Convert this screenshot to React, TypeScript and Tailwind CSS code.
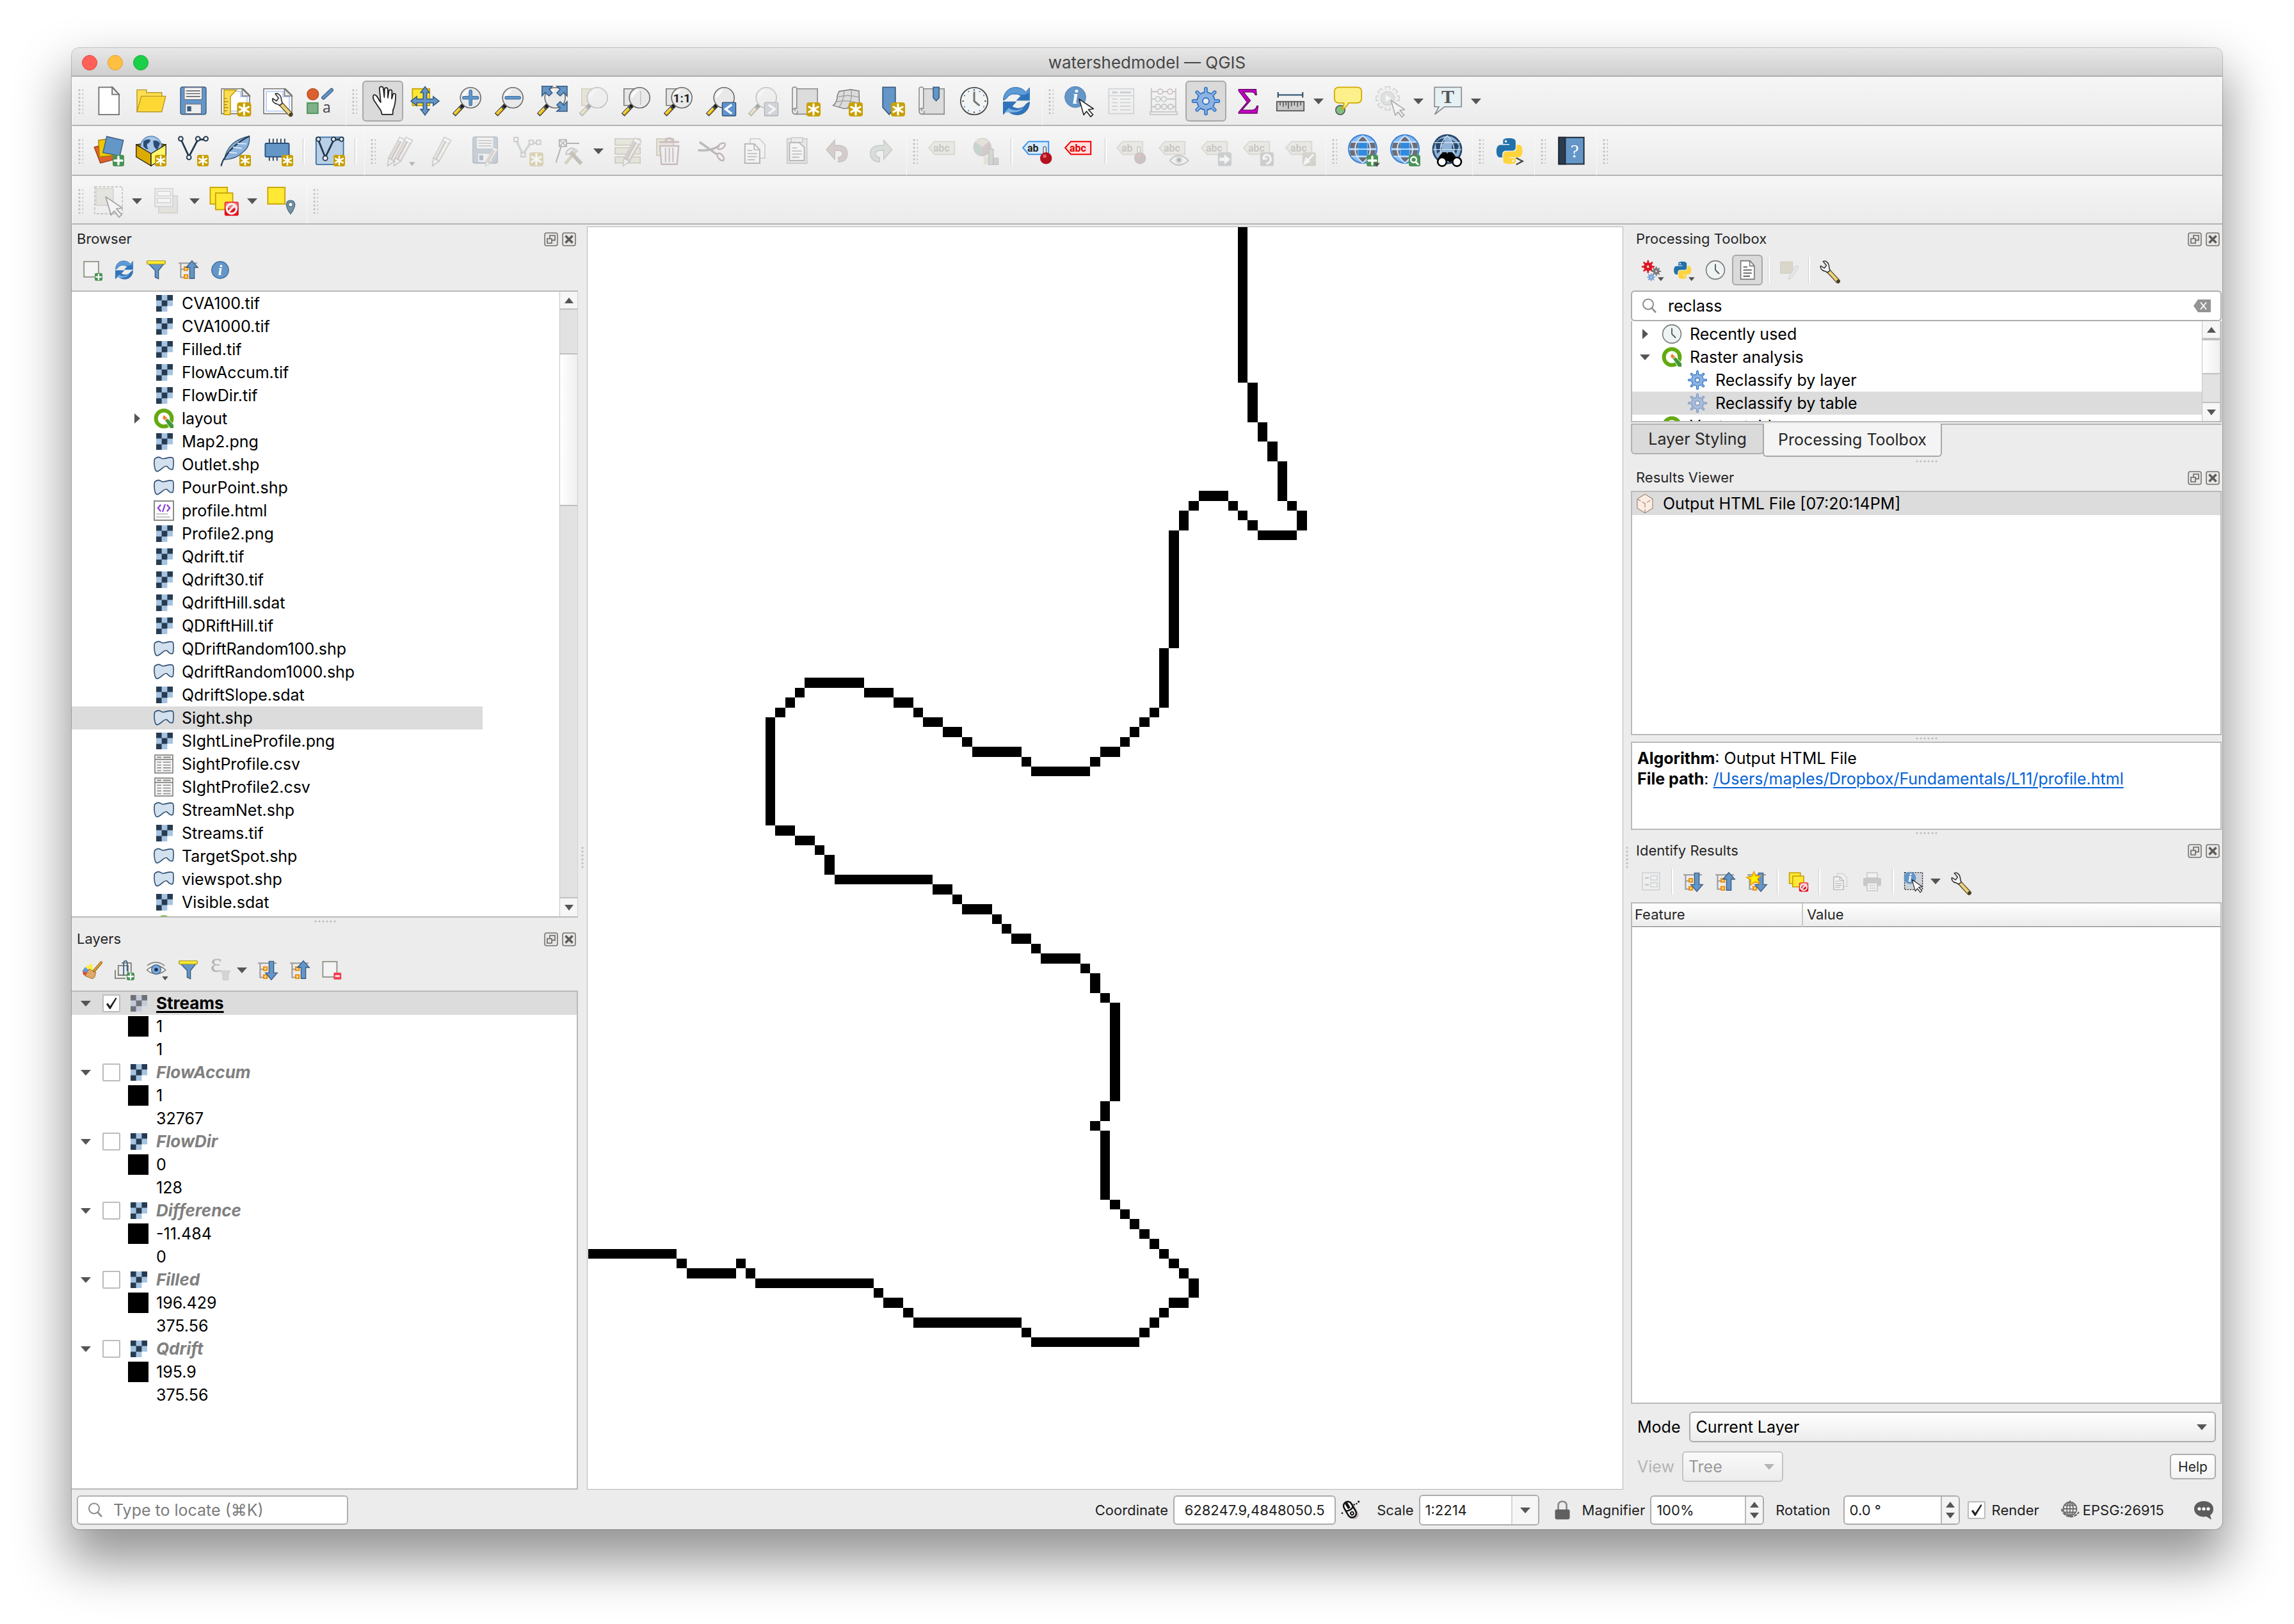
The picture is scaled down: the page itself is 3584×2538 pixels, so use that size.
import type { ReactNode } from "react";

const BLUE = "#6496c8";
const NAVY = "#3a5d82";
const DARK = "#233a4d";
const GREY = "#6d6d6d";

const PY_TOP =
  "M14.25.18l.9.2.73.26.59.3.45.32.34.34.25.34.16.33.1.3.04.26.02.2-.01.13V8.5l-.05.63-.13.55-.21.46-.26.38-.3.31-.33.25-.35.19-.35.14-.33.1-.3.07-.26.04-.21.02H8.77l-.69.05-.59.14-.5.22-.41.27-.33.32-.27.35-.2.36-.15.37-.1.35-.07.32-.04.27-.02.21v3.06H3.17l-.21-.03-.28-.07-.32-.12-.35-.18-.36-.26-.36-.36-.35-.46-.32-.59-.28-.73-.21-.88-.14-1.05-.05-1.23.06-1.22.16-1.04.24-.87.32-.71.36-.57.4-.44.42-.33.42-.24.4-.16.36-.1.32-.05.24-.01h.16l.06.01h8.16v-.83H6.18l-.01-2.75-.02-.37.05-.34.11-.31.17-.28.25-.26.31-.23.38-.2.44-.18.51-.15.58-.12.64-.1.71-.06.77-.04.84-.02 1.27.05zm-6.3 1.98l-.23.33-.08.41.08.41.23.34.33.22.41.09.41-.09.33-.22.23-.34.08-.41-.08-.41-.23-.33-.33-.22-.41-.09-.41.09z";
const PY_BOTTOM =
  "M21.1 6.11l.28.06.32.12.35.18.36.27.36.35.35.47.32.59.28.73.21.88.14 1.04.05 1.23-.06 1.23-.16 1.04-.24.86-.32.71-.36.57-.4.45-.42.33-.42.24-.4.16-.36.09-.32.05-.24.02-.16-.01h-8.22v.82h5.84l.01 2.76.02.36-.05.34-.11.31-.17.29-.25.25-.31.24-.38.2-.44.17-.51.15-.58.13-.64.09-.71.07-.77.04-.84.01-1.27-.04-1.07-.14-.9-.2-.73-.25-.59-.3-.45-.33-.34-.34-.25-.34-.16-.33-.1-.3-.04-.25-.02-.2.01-.13v-5.34l.05-.64.13-.54.21-.46.26-.38.3-.32.33-.24.35-.2.35-.14.33-.1.3-.06.26-.04.21-.02.13-.01h5.84l.69-.05.59-.14.5-.21.41-.28.33-.32.27-.35.2-.36.15-.36.1-.35.07-.32.04-.28.02-.21V6.07h2.09l.14.01zm-6.47 14.25l-.23.33-.08.41.08.41.23.33.33.23.41.08.41-.08.33-.23.23-.33.08-.41-.08-.41-.23-.33-.33-.23-.41-.08-.41.08z";

/* ---------- drawing helpers ---------- */

function Big({ children }: { children: ReactNode }) {
  return (
    <svg viewBox="0 0 24 24" className="size-12 overflow-visible" aria-hidden="true">
      {children}
    </svg>
  );
}

function Small({ children }: { children: ReactNode }) {
  return (
    <svg viewBox="0 0 16 16" className="size-8 shrink-0 overflow-visible" aria-hidden="true">
      {children}
    </svg>
  );
}

function StarBadge({ x = 15, y = 15, s = 9 }: { x?: number; y?: number; s?: number }) {
  return (
    <g transform={`translate(${x} ${y}) scale(${s / 9})`}>
      <rect width="9" height="9" rx="1.6" fill="#c8a000" />
      <path d="M4.5 1.2v6.6M1.6 2.9l5.8 3.2M7.4 2.9L1.6 6.1" stroke="#fff" strokeWidth="1.3" strokeLinecap="round" />
      <circle cx="4.5" cy="4.5" r="1.3" fill="#fff" />
    </g>
  );
}

function PlusBadge({ x = 15, y = 15, s = 9 }: { x?: number; y?: number; s?: number }) {
  return (
    <g transform={`translate(${x} ${y}) scale(${s / 9})`}>
      <rect width="9" height="9" rx="1.6" fill="#4b9358" />
      <path d="M4.5 1.5v6M1.5 4.5h6" stroke="#fff" strokeWidth="1.7" strokeLinecap="round" />
    </g>
  );
}

function NoEntry({ x, y, s }: { x: number; y: number; s: number }) {
  return (
    <g transform={`translate(${x} ${y}) scale(${s / 11})`}>
      <rect width="11" height="11" rx="1.4" fill="#e3101c" />
      <path d="M.6 5.2V1.6Q.6.6 1.6.6h7.8q1 0 1 1v3.6Z" fill="#f47a80" />
      <circle cx="5.5" cy="5.5" r="3.8" fill="none" stroke="#f1f1f1" strokeWidth="1.6" />
      <path d="M3 8L8 3" stroke="#f1f1f1" strokeWidth="1.6" />
    </g>
  );
}

function Lens({ children }: { children?: ReactNode }) {
  return (
    <>
      <path d="M8.6 15.4L1.6 22.8" stroke="#4c4c4c" strokeWidth="3.4" />
      <path d="M6.3 17.9L2.2 22.2" stroke="#fcc300" strokeWidth="1.9" />
      <path d="M5.9 17.2L1.7 21.6" stroke="#ffe57a" strokeWidth=".7" />
      <circle cx="8.4" cy="15.7" r="1.4" fill="#1a1a1a" />
      <circle cx="14.6" cy="9.4" r="8" fill="#e9e9e9" stroke="#6a6a6a" strokeWidth=".8" />
      <path d="M8 9.6A6.7 6.7 0 0 1 14.5 2.7C12 5 10.5 9 8 9.6Z" fill="#fbfbfb" />
      {children}
    </>
  );
}

function Arrowhead({ x, y }: { x: number; y: number }) {
  return <path d={`M${x} ${y}h4.8l-2.4 3Z`} fill="#505050" />;
}

function GearShape({ fill, stroke, c = 12, k = 1 }: { fill: string; stroke: string; c?: number; k?: number }) {
  const teeth = [0, 45, 90, 135, 180, 225, 270, 315];
  return (
    <g transform={`translate(${c} ${c}) scale(${k})`} strokeLinecap="round">
      {teeth.map((a) => (
        <path key={a} d="M0 -6V-9.7" stroke={stroke} strokeWidth="2.9" transform={`rotate(${a})`} />
      ))}
      <circle r="6.9" fill={fill} stroke={stroke} strokeWidth=".9" />
      {teeth.map((a) => (
        <path key={a} d="M0 -5V-9.7" stroke={fill} strokeWidth="1.3" transform={`rotate(${a})`} />
      ))}
      <circle r="2.5" fill="#ececec" stroke={stroke} strokeWidth=".9" />
    </g>
  );
}

function RefreshShape() {
  const arm = "M1.8 11.4C1.8 5.4 6 1.3 11.2 1.3C15 1.3 17.6 2.8 19.2 5L22.2 1.6V11.4H12.2L15.4 8C13 5.4 6.6 5.6 4.4 9.8Z";
  return (
    <>
      <path d={arm} fill="#5b9bd8" stroke="#2c68a8" strokeWidth=".5" />
      <path d="M9 7.2C12 6 14.6 7 15.8 8.2L13 11H21.8V5C17 9 14 6 9 7.2Z" fill="#2f74bb" />
      <path d={arm} fill="#2f74bb" stroke="#2c68a8" strokeWidth=".5" transform="rotate(180 12 12)" />
      <path d="M3 20.6L6 17.4C9 20 16 20 18.4 15.4C16 22 8 21 3 20.6Z" fill="#7db1e3" />
    </>
  );
}

function CursorShape({ x = 12, y = 11.5, k = 1 }: { x?: number; y?: number; k?: number }) {
  return (
    <path
      d="M0 0L11.2 7.6L7.2 8.2L10.8 12.2L9 13.8L5.8 9.6L3.6 12.4Z"
      fill="#fff"
      stroke="#222"
      strokeWidth=".8"
      strokeLinejoin="round"
      transform={`translate(${x} ${y}) scale(${k})`}
    />
  );
}

function SheetShape({ lines = true }: { lines?: boolean }) {
  return (
    <>
      <path d="M1 2.4H18L23 7.4V21.8H1Z" fill="#fff" stroke="#777" strokeWidth=".8" />
      {lines && <path d="M3 4.4H16V8.6H21V19.8H3Z" fill="none" stroke="#b9cdf4" strokeWidth=".9" />}
      <path d="M17.2 2.4V8H23Z" fill="#e8e8e8" stroke="#777" strokeWidth=".8" />
    </>
  );
}

function WrenchShape() {
  return (
    <>
      <path d="M14.2 14L22 22.4" stroke="#4c4020" strokeWidth="3.6" strokeLinecap="round" />
      <path d="M14.6 14.4L21.6 22" stroke="#ecd27a" strokeWidth="2.4" />
      <circle cx="21.8" cy="22" r=".9" fill="#3c3c3c" />
      <path
        d="M10 6.4C11.6 5.4 14 6.8 14.6 9.4C14.8 10.8 14.8 12 15.6 13.6L13.4 15.4C12.4 14.2 11 14.4 9.6 13.6C8 12.4 7.6 11 8 10L11 11.8L12.6 9.6Z"
        fill="#f3f3f3"
        stroke="#333"
        strokeWidth=".8"
      />
    </>
  );
}

function Tag({ text = "abc", stroke = "#b4ae8c", fill = "#dcd8c0", ink = "#77776c" }: { text?: string; stroke?: string; fill?: string; ink?: string }) {
  return (
    <>
      <path d="M.6 9.5L5 4.6H20.6V14.6H5Z" fill={fill} stroke={stroke} strokeWidth="1" />
      <text x="4" y="12.4" fontSize="8" fontWeight="700" fontFamily="Roboto, sans-serif" fill={ink}>
        {text}
      </text>
    </>
  );
}

function PinHead({ c }: { c: string }) {
  return (
    <>
      <path d="M17.6 14V9.6" stroke="#555" strokeWidth="2.8" strokeLinecap="round" />
      <path d="M17.6 14V9.6" stroke="#eee" strokeWidth="1.6" strokeLinecap="round" />
      <circle cx="18.6" cy="17.6" r="4.6" fill={c} />
      <circle cx="17.6" cy="16" r="1.4" fill="#e8606a" />
    </>
  );
}

function PencilShape({ x = 0, body = "#d8b4a8" }: { x?: number; body?: string }) {
  return (
    <g transform={`translate(${x} 0)`}>
      <path d="M4 17.4L12.6 1.2L17.8 3.8L8.6 20Z" fill={body} stroke="#8c8c8c" strokeWidth=".7" />
      <path d="M6.2 18.4L14.6 2.6" stroke="#8a7468" strokeWidth="1" />
      <path d="M12.6 1.2L17.8 3.8L16.4 6.2L11.2 3.8Z" fill="#f6f6f6" stroke="#8c8c8c" strokeWidth=".7" />
      <path d="M4 17.4L8.6 20L3.2 23.6Z" fill="#eee" stroke="#777" strokeWidth=".7" />
      <path d="M7.6 18L15 5" stroke="#fff" strokeWidth=".8" />
    </g>
  );
}

function FloppyShape() {
  return (
    <>
      <rect x="2" y="1" width="20" height="21.4" rx="1.6" fill={BLUE} stroke={NAVY} strokeWidth=".7" />
      <rect x="5" y="1.4" width="13.8" height="9.4" fill="#f3f3f3" stroke="#667" strokeWidth=".5" />
      <path d="M6.4 4H17.4M6.4 6.2H17.4M6.4 8.4H17.4" stroke="#555" strokeWidth=".7" />
      <rect x="5.8" y="14.4" width="12.4" height="7.4" fill="#eee" stroke="#667" strokeWidth=".5" />
      <rect x="7.2" y="16" width="3.2" height="4" fill={NAVY} />
    </>
  );
}

function RollShape() {
  return (
    <>
      <path d="M4 2.4H21.6V22.2H4Z" fill="#dcdcdc" stroke="#8c8c8c" strokeWidth=".8" />
      <path d="M2 2.6Q2 1 3.6 1Q5.4 1 5.4 2.6V17.6H3.6Q2 18 2 20.4Z" fill="#efefef" stroke="#8c8c8c" strokeWidth=".8" />
      <path d="M2 20Q2 22.2 4.4 22.2Q6 22 6 19.6" fill="#e6e6e6" stroke="#8c8c8c" strokeWidth=".8" />
    </>
  );
}

function GlobeWire() {
  return (
    <>
      <circle cx="12" cy="10.4" r="11" fill="#8bbcf0" stroke="#3f86d8" strokeWidth="1.1" />
      <path d="M3 5.4H8.4V9.8H2Q2 7.4 3 5.4ZM2 11.4H8V15.8H3Q2 13.6 2 11.4ZM16 5.4H21Q22 7.4 22 9.8H16ZM16 11.4H22Q22 13.6 21 15.8H16ZM12 .4Q14.6 2 15.4 4.4H8.6Q9.4 2 12 .4ZM8.6 17H15.4Q14.4 19.6 12 21Q9.6 19.6 8.6 17Z" fill="#6d6d74" />
      <rect x="8.6" y="5.6" width="6.8" height="10" fill="#2f8ae0" />
      <path d="M1.2 10.6H22.8M3 5H21M3 16.2H21" stroke="#cfe6ff" strokeWidth=".9" />
      <path d="M12 0C4 6 4 15 12 21.4M12 0C20 6 20 15 12 21.4" fill="none" stroke="#cfe6ff" strokeWidth="1" />
    </>
  );
}

function SelectedSquare() {
  return <rect x="1.2" y="1.4" width="13.4" height="13" fill="#ffe935" stroke="#c8a000" strokeWidth=".9" />;
}

/* ---------- toolbar icons ---------- */

const copyArt = (
  <>
    <path d="M8.6 2.4H15.6L20 7V17.6H8.6Z" fill="#f2f2f2" stroke="#888" strokeWidth=".8" />
    <path d="M4.4 6.4H11.8L16 11V21.6H4.4Z" fill="#f8f8f8" stroke="#444" strokeWidth=".9" />
    <path d="M11.6 6.4V11H16M6.4 11.6H10M6.4 14H13.8M6.4 16.4H13.8M6.4 18.8H12" fill="none" stroke="#555" strokeWidth=".8" />
  </>
);

const Icons = {
  newProject: (
    <Big>
      <path d="M4.2 1.2H15L20 6.8V22.6H4.2Z" fill="#fff" stroke="#707070" strokeWidth=".9" />
      <path d="M14.6 1.2V6.8H20Z" fill="#eee" stroke="#707070" strokeWidth=".9" />
    </Big>
  ),
  open: (
    <Big>
      <path d="M1 20.2V3.2H8.4V5.4H20.4V9" fill="#ffdf4e" stroke="#b8962c" strokeWidth=".7" />
      <path d="M1 20.4L4.4 8.2H23.4L20.4 20.4Z" fill="#fdd835" stroke="#b8962c" strokeWidth=".7" />
    </Big>
  ),
  save: <Big><FloppyShape /></Big>,
  newLayout: (
    <Big>
      <SheetShape />
      <path d="M3 3.4H12.6L8 8.4V22.6H3Z" fill="#fbdc55" stroke="#c8a000" strokeWidth=".8" />
      <path d="M3 10h2.4M3 12.4h3.4M3 14.8h2.4M3 17.2h3.4M3 19.6h2.4" stroke="#9a7c00" strokeWidth=".6" />
      <StarBadge x={13.2} y={13} s={11} />
    </Big>
  ),
  layoutManager: <Big><SheetShape /><WrenchShape /></Big>,
  styleManager: (
    <Big>
      <circle cx="6.4" cy="6.6" r="4.4" fill="#dd6130" stroke="#b14a1e" strokeWidth=".7" />
      <path d="M14.6 9.4L21 3.4" stroke={NAVY} strokeWidth="3" strokeLinecap="round" />
      <path d="M14.6 9.4L21 3.4" stroke={BLUE} strokeWidth="1.8" strokeLinecap="round" />
      <rect x="2" y="13.4" width="8.4" height="8.2" fill="#7fb089" stroke="#4b9358" strokeWidth=".9" />
      <text x="14" y="21" fontSize="11.5" fontFamily="'Open Sans', sans-serif" fill="#444">a</text>
    </Big>
  ),
  pan: (
    <Big>
      <path
        d="M11.4 22.4L10.6 19.5L5.2 11.5C4 9 4.2 7.4 5.4 7.1C6.8 6.9 7.8 8.6 9.6 12L10.4 13L9.4 2C9.4 .3 12.2 .3 12.4 2L13.2 9L13.4 2.6C13.6 1.2 15.9 1.3 15.9 2.8L16 9.4L16.8 4C17 2.8 19.2 3 19.2 4.4L19 10.2L20 6.8C20.4 5.6 22.2 6 22.1 7.4C22 12 21.5 16 20 19L19.8 22.4Z"
        fill="#fff"
        stroke="#222"
        strokeWidth=".9"
        strokeLinejoin="round"
      />
    </Big>
  ),
  panSelection: (
    <Big>
      <rect x="2.2" y="2.4" width="13.4" height="13" fill="#ffe935" stroke="#c8a000" strokeWidth=".9" />
      <path
        d="M12 .8L15.4 5.4H13.4V10.4H18.4V8.4L23 12L18.4 15.6V13.4H13.4V18.4H15.4L12 23L8.6 18.4H10.6V13.4H5.6V15.6L1 12L5.6 8.4V10.4H10.6V5.4H8.6Z"
        fill={BLUE}
        stroke={NAVY}
        strokeWidth=".8"
      />
    </Big>
  ),
  zoomIn: <Big><Lens><path d="M14.6 4.4V14.4M9.4 9.4H19.8" stroke="#3a6fa5" strokeWidth="2.8" strokeLinecap="round" /><path d="M14.6 4.4V14.4M9.4 9.4H19.8" stroke={BLUE} strokeWidth="1.8" strokeLinecap="round" /></Lens></Big>,
  zoomOut: <Big><Lens><path d="M9.6 9.4H19.6" stroke="#3a6fa5" strokeWidth="2.8" strokeLinecap="round" /><path d="M9.6 9.4H19.6" stroke={BLUE} strokeWidth="1.8" strokeLinecap="round" /></Lens></Big>,
  zoomFull: (
    <Big>
      <Lens />
      <g fill={BLUE} stroke={NAVY} strokeWidth=".8">
        <path d="M4.4 .4H12.4L10 2.8L12.4 5.6L9.8 8L7 5.2L4.4 8Z" />
        <path d="M24 .4H16L18.6 2.8L16 5.6L18.6 8L21.4 5.2L24 8Z" />
        <path d="M24 20H16L18.6 17.6L16 15L18.6 12.4L21.4 15.2L24 12.4Z" />
      </g>
    </Big>
  ),
  zoomSelection: <Big><rect x="2.4" y="2.4" width="13" height="13" fill="#d8cf8a" stroke="#a89a40" strokeWidth=".8" /><Lens /></Big>,
  zoomLayer: <Big><path d="M2.4 2.4H15.4V15.4H2.4Z" fill="#e6e6e6" stroke="#7c7c74" strokeWidth=".8" /><Lens><path d="M15.4 4V15" stroke="#c4c4c4" strokeWidth=".8" /></Lens></Big>,
  zoomNative: (
    <Big>
      <path d="M2.4 2.4H15.4V15.4H2.4Z" fill="#e6e6e6" stroke="#7c7c74" strokeWidth=".8" />
      <Lens><text x="14.6" y="13" fontSize="9.6" fontWeight="700" textAnchor="middle" fontFamily="Roboto, sans-serif" fill="#222">1:1</text></Lens>
    </Big>
  ),
  zoomLast: <Big><Lens /><rect x="13.2" y="13" width="10.6" height="10.6" rx=".8" fill="#5d94cf" stroke="#26415e" strokeWidth=".6" /><path d="M20.6 14.8L15.8 18.3L20.6 21.8" fill="none" stroke="#fff" strokeWidth="1.7" /></Big>,
  zoomNext: <Big><Lens /><rect x="13.2" y="13" width="10.6" height="10.6" rx=".8" fill="#8fa6bd" stroke="#26415e" strokeWidth=".6" /><path d="M16.4 14.8L21.2 18.3L16.4 21.8" fill="none" stroke="#fff" strokeWidth="1.7" /></Big>,
  newMapView: <Big><RollShape /><StarBadge x={13} y={13} s={11} /></Big>,
  new3d: (
    <Big>
      <path d="M5.4 4.4L14.6 3L21 4L21.4 17L9 17.8L.8 15.4Q4 13 4 8Z" fill="#dcdcdc" stroke="#777" strokeWidth=".7" />
      <path d="M9.4 4Q9.4 11 5.6 16.6M15 3.2Q16 11 12 17.6M3.6 9Q12 6.4 21.2 9M2.6 12.6Q12 10.6 21.2 13.6" fill="none" stroke="#999" strokeWidth=".6" />
      <StarBadge x={13} y={13} s={11} />
    </Big>
  ),
  newBookmark: <Big><path d="M6.6 1.2H16.4V17L11.6 22.4L6.6 17Z" fill={BLUE} stroke={NAVY} strokeWidth=".9" /><StarBadge x={13} y={13} s={11} /></Big>,
  bookmarks: <Big><RollShape /><path d="M13 1.2H17.6V9.4L15.3 11.8L13 9.4Z" fill={BLUE} stroke={NAVY} strokeWidth=".8" /></Big>,
  temporal: (
    <Big>
      <circle cx="12" cy="12" r="10.6" fill="#f2f4f4" stroke="#484848" strokeWidth=".9" />
      {[0, 30, 60, 90, 120, 150, 180, 210, 240, 270, 300, 330].map((a) => (
        <circle key={a} cx="12" cy="3.3" r=".6" fill={a % 90 ? BLUE : "#2d4c6b"} transform={`rotate(${a} 12 12)`} />
      ))}
      <path d="M12 4.6V12L16.2 15.6" fill="none" stroke="#777" strokeWidth="1.5" />
    </Big>
  ),
  refresh: <Big><RefreshShape /></Big>,
  identify: (
    <Big>
      <circle cx="9" cy="8.8" r="8.2" fill={BLUE} stroke="#4b7db3" strokeWidth=".5" />
      <text x="9" y="14.2" fontSize="16" fontStyle="italic" fontWeight="700" textAnchor="middle" fontFamily="'Liberation Serif', serif" fill="#fff">i</text>
      <CursorShape x={12} y={10.4} />
    </Big>
  ),
  attributes: (
    <Big>
      <rect x="2.2" y="2.4" width="19.4" height="19.4" fill="#f4f4f4" stroke="#93a0aa" strokeWidth=".9" />
      <path d="M2.2 7.8H21.6" stroke="#93a0aa" strokeWidth=".9" />
      <path d="M4.6 5.2H9M11 5.2H19.4" stroke="#7f95ad" strokeWidth="1.6" />
      <path d="M4.6 10.4H9M11 10.4H19.4M4.6 13.2H9M11 13.2H19.4M4.6 16H9M11 16H19.4M4.6 18.8H9M11 18.8H19.4" stroke="#93a0aa" strokeWidth=".9" />
    </Big>
  ),
  abacus: (
    <Big>
      <path d="M2.4 2V21M21.4 2V21M2.4 4.6H21.4M2.4 10.4H21.4M2.4 16.4H21.4" stroke="#777" strokeWidth="1" />
      <rect x="1.4" y="20.4" width="21.2" height="2.2" fill="#eee" stroke="#777" strokeWidth=".8" />
      <g fill="#eee" strokeWidth=".9">
        <g stroke="#b06070"><circle cx="9.4" cy="4.6" r="2" /><circle cx="17" cy="4.6" r="2" /></g>
        <g stroke="#6a9a78"><circle cx="7.4" cy="10.4" r="2" /><circle cx="12.2" cy="10.4" r="2" /></g>
        <g stroke="#777"><circle cx="7.4" cy="16.4" r="2" /><circle cx="12.4" cy="16.4" r="2" /><circle cx="17.4" cy="16.4" r="2" /></g>
      </g>
    </Big>
  ),
  gear: <Big><GearShape fill="#8db3e2" stroke="#2f73c4" /></Big>,
  sigma: (
    <Big>
      <path d="M4.6 2.8H18.2L18.6 7.2H17.6Q17 4.9 14.6 4.9H8.4L13.8 11.6L7.2 19H15Q18 19 18.8 15.8H19.8L19 21.6H4.6V20.6L11.2 12.8L4.6 4Z" fill="#c400c4" stroke="#5a0a5a" strokeWidth=".6" />
    </Big>
  ),
  measure: (
    <Big>
      <path d="M2.4 7.2H21.6M2.4 5V9.2M21.6 5V9.2" stroke="#3b5c78" strokeWidth="1.2" />
      <rect x="1.4" y="12.4" width="21.2" height="7.2" fill="#c9c9c9" stroke="#555" strokeWidth=".9" />
      <path d="M4 12.8V15.4M6.4 12.8V16.4M8.6 12.8V15.4M10.4 12.8V18M12.8 12.8V16M15.2 12.8V15.4M17.6 12.8V16.4M20 12.8V15.4" stroke="#444" strokeWidth=".7" />
    </Big>
  ),
  mapTips: (
    <Big>
      <circle cx="6" cy="19" r="3.6" fill="#7fbf87" stroke="#555" strokeWidth=".8" />
      <path d="M4.6 1.2H19.6Q22.6 1.4 22.6 4.6V9.8Q22.4 13.2 19.6 13.4H12.4Q10.6 17.6 6.4 18.6Q9 16.4 8.8 13.4H4.6Q1.4 13.2 1.4 9.8V4.6Q1.6 1.4 4.6 1.2Z" fill="#fdf08a" stroke="#d0aa00" strokeWidth=".9" />
    </Big>
  ),
  runAction: (
    <Big>
      {[0, 45, 90, 135, 180, 225, 270, 315].map((a) => (
        <path key={a} d="M10 .4V5" stroke="#8c8c8c" strokeWidth="4.4" transform={`rotate(${a} 10 9.8)`} />
      ))}
      {[0, 45, 90, 135, 180, 225, 270, 315].map((a) => (
        <path key={a} d="M10 1.1V5" stroke="#eee" strokeWidth="3" transform={`rotate(${a} 10 9.8)`} />
      ))}
      <circle cx="10" cy="9.8" r="7.2" fill="#eee" />
      <circle cx="10" cy="9.8" r="5.4" fill="#b8c2ca" stroke="#999" strokeWidth=".6" />
      <path d="M8.4 7V12.8L12.6 9.8Z" fill="#fff" />
      <CursorShape x={12.6} y={11.4} k={0.95} />
    </Big>
  ),
  annotation: (
    <Big>
      <path d="M1.6 1.2H22.6V16.4H9.4L1.8 22.4L5 16.4H1.6Z" fill="#e6f1f5" stroke="#8d9296" strokeWidth=".9" />
      <text x="12" y="13.6" fontSize="15" textAnchor="middle" fontWeight="700" fontFamily="'Liberation Serif', serif" fill="#555">T</text>
    </Big>
  ),
  addLayer: (
    <Big>
      <path d="M.6 9L12 6L17 18.4L5.4 21.4Z" fill="#dd6130" stroke="#a34218" strokeWidth=".7" />
      <path d="M4 3.6L16 2L17.6 15.4L4.6 16.6Z" fill="#f0c800" stroke="#a07c00" strokeWidth=".7" />
      <path d="M10.4 .6L23.4 3.6L20.6 15.8L7.4 13.2Z" fill={BLUE} stroke={NAVY} strokeWidth=".7" />
      <PlusBadge />
    </Big>
  ),
  geopackage: (
    <Big>
      <path d="M.4 7L12 5L23.6 7L12 14Z" fill="#8a6d00" stroke="#111" strokeWidth=".5" />
      <circle cx="12" cy="8.6" r="8.2" fill="#a8c6e8" stroke="#4b7db3" strokeWidth=".6" />
      <path d="M6 4.4Q9 2 11.6 3.4Q11 6 9 6.4Q8.4 9 10 10.4Q8 11 6 8.4ZM13.6 4Q17 3 19 6Q18 9.4 16.6 11Q14 9 14 7Z" fill="#2b4d75" />
      <path d="M.4 7L12 14V23.6L.4 16.6Z" fill="#dcab00" stroke="#111" strokeWidth=".6" />
      <path d="M23.6 7L12 14V23.6L23.6 16.6Z" fill="#fdf56a" stroke="#111" strokeWidth=".6" />
      <StarBadge />
    </Big>
  ),
  shapefile: (
    <Big>
      <path d="M2.4 3L8.6 16.4L15.6 3H21.4" fill="none" stroke={DARK} strokeWidth="1.4" />
      <g fill="#fff" stroke={DARK} strokeWidth="1"><circle cx="2.2" cy="2.4" r="1.7" /><circle cx="8.6" cy="17" r="1.7" /><circle cx="15.6" cy="2.4" r="1.7" /><circle cx="21.8" cy="2.4" r="1.7" /></g>
      <StarBadge />
    </Big>
  ),
  spatialite: (
    <Big>
      <path d="M22.8 .4Q23.4 9 17.6 13Q13 18 3.4 18.8Q4 12 9.6 6.4Q15 2 22.8 .4Z" fill="#8bb2dc" stroke={NAVY} strokeWidth=".7" />
      <path d="M22.8 .4Q10 7 4 16.6Q1.4 20 .8 23.8" fill="none" stroke={DARK} strokeWidth="1.1" />
      <path d="M10 9L17 10M7 13L13 13.6M13.4 6L20.4 6.4" stroke="#dbe8f6" strokeWidth=".9" />
      <StarBadge />
    </Big>
  ),
  memoryLayer: (
    <Big>
      <path d="M5.4 6V2.4M8.4 6V2.4M11.4 6V2.4M14.4 6V2.4M17.4 6V2.4M5.4 16V19.6M8.4 16V19.6M11.4 16V19.6" stroke={DARK} strokeWidth=".9" />
      <rect x="2.2" y="6" width="18.6" height="10.6" rx=".8" fill={BLUE} stroke="#264f7c" strokeWidth=".9" />
      <StarBadge />
    </Big>
  ),
  virtualLayer: (
    <Big>
      <rect x="1.4" y="1.2" width="21.4" height="21.4" rx="1" fill="#b9cfe6" stroke="#3a6fa5" strokeWidth=".9" />
      <path d="M3 3L8.6 17L15.4 3H21.4" fill="none" stroke={DARK} strokeWidth="1.4" />
      <g fill="#eef4fa" stroke={DARK} strokeWidth=".9"><circle cx="3.2" cy="2.8" r="1.6" /><circle cx="8.6" cy="17.6" r="1.8" /><circle cx="15" cy="2.8" r="1.6" /><circle cx="21.2" cy="2.8" r="1.6" /></g>
      <StarBadge />
    </Big>
  ),
  editsAll: <Big><PencilShape x={-2} /><PencilShape x={3} /><Arrowhead x={18} y={20.6} /></Big>,
  edit: <Big><PencilShape x={0} body="#d8d6b8" /></Big>,
  saveEdits: <Big><g transform="scale(.96)"><FloppyShape /></g><g transform="translate(9.6 8.4) scale(.66)"><PencilShape /></g></Big>,
  addFeature: (
    <Big>
      <path d="M2.6 3.6L8 14.4L14 5.6H21" fill="none" stroke="#8ba0a8" strokeWidth="1.7" />
      <g fill="#eee" stroke="#8a8a8a" strokeWidth="1"><rect x="1" y="1.4" width="3.2" height="3.2" /><rect x="6.6" y="13.4" width="3.2" height="3.2" /><rect x="12.8" y="3.6" width="3.2" height="3.2" /><rect x="18.6" y="3.6" width="3.2" height="3.2" /></g>
      <StarBadge x={13} y={13} s={11} />
    </Big>
  ),
  vertexTool: (
    <Big>
      <path d="M5.6 6L.8 21M8 6H19" stroke="#444" strokeWidth="1" />
      <rect x="3.4" y="3.2" width="5.6" height="5.2" fill="#eee" stroke="#444" strokeWidth=".9" />
      <path d="M3.4 3.2L9 8.4M9 3.2L3.4 8.4" stroke="#444" strokeWidth=".7" />
      <path d="M8 22L17.4 11" stroke="#a8a050" strokeWidth="2.4" />
      <path d="M20.6 22L12 12.6" stroke="#806a4a" strokeWidth="3" />
      <path d="M8.4 14.6Q9 10.4 13.4 9.6L15.4 10.4L11 14.6Z" fill="#ddd" stroke="#666" strokeWidth=".7" />
    </Big>
  ),
  modifyAttributes: (
    <Big>
      <path d="M2 2.4H21.6V7.4H2ZM2 9.4H21.6V14.4H2ZM2 16.6H21.6V21.4H2Z" fill="#d4cf9c" stroke="#8c8540" strokeWidth=".8" />
      <g transform="translate(5 .6) scale(.98)"><PencilShape body="#c09080" /></g>
    </Big>
  ),
  trash: (
    <Big>
      <rect x="1.4" y="2.4" width="13.4" height="13" fill="#d4cf9c" stroke="#8c8540" strokeWidth=".8" />
      <path d="M3.4 5H19M8.4 4.4Q8.6 2 11.2 2Q13.8 2 14 4.4" stroke="#a05560" strokeWidth="1.4" fill="none" />
      <path d="M4 8H18.6L17.4 22.4H5.2Z" fill="#eee" stroke="#a05560" strokeWidth="1.2" />
      <path d="M8.4 9.4V20.8M11.3 9.4V20.8M14.2 9.4V20.8" stroke="#a05560" strokeWidth="1" />
    </Big>
  ),
  cut: (
    <Big>
      <path d="M2 5L15.4 14.6M.8 11.4Q10 12.4 17.4 8" fill="none" stroke="#555" strokeWidth="1.7" />
      <ellipse cx="19" cy="8.2" rx="3.4" ry="1.9" transform="rotate(-35 19 8.2)" fill="none" stroke="#8c4040" strokeWidth="1.2" />
      <ellipse cx="18.4" cy="16.6" rx="3.4" ry="1.9" transform="rotate(50 18.4 16.6)" fill="none" stroke="#8c4040" strokeWidth="1.2" />
    </Big>
  ),
  copy: <Big>{copyArt}</Big>,
  paste: (
    <Big>
      <rect x="4.4" y="2.4" width="15.4" height="19.2" fill="#d8d4c0" stroke="#888" strokeWidth=".9" />
      <rect x="7.6" y="1.6" width="9" height="3.6" fill="#ddd" stroke="#777" strokeWidth=".7" />
      <path d="M6.2 5.4H13.8L17.8 9.2V19.4H6.2Z" fill="#f8f8f8" stroke="#444" strokeWidth=".9" />
      <path d="M8.2 9.6H12M8.2 12H15.8M8.2 14.4H15.8M8.2 16.8H14" stroke="#555" strokeWidth=".8" />
    </Big>
  ),
  undo: <Big><path d="M2 11L8.6 3.4V7.6H11Q18.4 7.6 18.4 14Q18.4 20.4 11.4 20.6V17Q14.6 16.8 14.6 14Q14.4 11.6 11 11.6H8.6V18.4Z" fill="#b08a80" stroke="#8a6a60" strokeWidth=".7" /></Big>,
  redo: <Big><path d="M20.4 11L13.8 3.4V7.6H11.4Q3.4 7.6 3.4 14Q3.6 20.4 10.6 20.6V17Q7.4 16.8 7.4 14Q7.6 11.6 11.4 11.6H13.8V18.4Z" fill="#a8bcae" stroke="#708c78" strokeWidth=".7" /></Big>,
  label: <Big><Tag /></Big>,
  diagram: (
    <Big>
      <circle cx="9.4" cy="9" r="6.8" fill="#6aa48c" stroke="#889" strokeWidth=".7" />
      <path d="M9.4 9L4 4.6Q9 .4 14.6 4.6Z" fill="#cfc88a" />
      <path d="M9.4 9L14.6 4.6Q18.6 10 12.6 15.2L9.4 15.8Z" fill="#b87880" />
      <rect x="10.4" y="16.2" width="4" height="6.4" fill="#d8cd90" />
      <rect x="14.4" y="10.4" width="3.6" height="12.2" fill="#8ab09e" stroke="#667" strokeWidth=".6" />
      <rect x="18" y="17.6" width="3.8" height="5" fill="#c08a90" stroke="#667" strokeWidth=".6" />
    </Big>
  ),
  pinnedLabels: <Big><Tag text="ab" stroke="#3b95ee" fill="#d5eafc" ink="#222" /><PinHead c="#b3131f" /></Big>,
  unplacedLabels: <Big><Tag stroke="#f40000" fill="#ffdede" ink="#e00000" /></Big>,
  pinLabel: <Big><Tag text="ab" /><PinHead c="#9a7070" /></Big>,
  showLabel: (
    <Big>
      <Tag />
      <path d="M8.8 19.4Q15.6 11.6 23.4 19.4Q15.6 26.6 8.8 19.4Z" fill="#f4f4f4" stroke="#777" strokeWidth=".9" />
      <circle cx="16" cy="19" r="2.8" fill="#a4b4c4" /><circle cx="16" cy="19" r="1.2" fill="#333" />
    </Big>
  ),
  moveLabel: <Big><Tag /><rect x="13.4" y="13" width="10.6" height="10.8" rx="1.6" fill="#8a9298" /><path d="M14.6 17.2H18.4V14.6L23 18.6L18.4 22.4V19.8H14.6Z" fill="#fff" /></Big>,
  rotateLabel: <Big><Tag /><rect x="13.4" y="13" width="10.6" height="10.8" rx="1.6" fill="#8a9298" /><path d="M18 22Q22 21 21.6 17.8Q21 15 18.4 15Q15.8 15.4 16 18H19" fill="none" stroke="#fff" strokeWidth="1.6" /></Big>,
  changeLabel: <Big><Tag /><rect x="13.4" y="13" width="10.6" height="10.8" rx="1.6" fill="#a8a082" /><path d="M15 22L22 14.6M15 22L16.4 18L18.4 20Z" stroke="#fff" strokeWidth="1.5" fill="#fff" /></Big>,
  metaAdd: <Big><GlobeWire /><PlusBadge /><Arrowhead x={20.6} y={21.4} /></Big>,
  metaSearch: <Big><GlobeWire /><rect x="15" y="15" width="9" height="9" rx="1.6" fill="#4b9358" /><circle cx="18.8" cy="18.8" r="2.2" fill="none" stroke="#fff" strokeWidth="1.2" /><path d="M20.4 20.6L22.6 22.8" stroke="#fff" strokeWidth="1.4" /></Big>,
  binoculars: (
    <Big>
      <circle cx="12" cy="10.6" r="11" fill="#8fb2d6" stroke="#27466b" strokeWidth="1.4" />
      <path d="M3 6Q6 2 10 2L9.6 6L6.4 7L8 11L4 14ZM14 3Q19 4 21 8L19 14L15.6 10L16 6Z" fill="#27466b" />
      <path d="M2 5.4H22M1 10.8H23M12 0Q4 8 8 16M12 0Q20 8 16 16" stroke="#cfdff0" strokeWidth=".7" fill="none" />
      <path d="M8.4 13H11.4L12 14.4L12.6 13H15.8Q17.4 14.4 19.4 17.6L14 21Q12 18.6 10 21L4.8 17.6Q6.8 14.6 8.4 13Z" fill="#000" />
      <circle cx="8" cy="20.4" r="3.4" fill="#fff" stroke="#000" strokeWidth="1.3" />
      <circle cx="19.6" cy="20.4" r="3.4" fill="#fff" stroke="#000" strokeWidth="1.3" />
    </Big>
  ),
  python: (
    <Big>
      <g transform="translate(2 2) scale(.84)"><path d={PY_TOP} fill="#2271aa" /><path d={PY_BOTTOM} fill="#ffd43b" /></g>
      <path d="M17.4 17.4L22.4 20L17.4 22.6" fill="none" stroke="#444" strokeWidth="1.1" />
    </Big>
  ),
  help: (
    <Big>
      <rect x="2.2" y="1.4" width="19.6" height="20.8" fill={BLUE} stroke="#222a36" strokeWidth="1" />
      <rect x="2.2" y="1.4" width="5" height="20.8" fill="#2b3c50" stroke="#222a36" strokeWidth="1" />
      <text x="14.6" y="17" fontSize="14.5" textAnchor="middle" fontFamily="'Liberation Serif', serif" fill="#fff">?</text>
    </Big>
  ),
  selectFeatures: (
    <Big>
      <rect x="1" y="1" width="21.6" height="21" fill="none" stroke="#777" strokeWidth=".9" strokeDasharray="2 1.2" />
      <rect x="2" y="2.4" width="13.4" height="13" fill="#cfcaae" stroke="#a9a37e" strokeWidth=".9" />
      <CursorShape x={9.6} y={8.8} k={1.15} />
    </Big>
  ),
  selectByForm: (
    <Big>
      <rect x="6" y="8" width="14.6" height="13.4" fill="#cfcaae" stroke="#a9a37e" strokeWidth=".9" />
      <rect x="3" y="2.4" width="14" height="14" fill="#e9ebeb" stroke="#97a0a6" strokeWidth=".9" />
      <path d="M4.8 4.6H15.2V8H4.8ZM4.8 10H15.2V13.4H4.8Z" fill="#fff" stroke="#97a0a6" strokeWidth=".8" />
    </Big>
  ),
  deselect: (
    <Big>
      <SelectedSquare />
      <rect x="5.4" y="5.8" width="13.4" height="13" fill="#ffe935" stroke="#c8a000" strokeWidth=".9" />
      <NoEntry x={12.4} y={12.6} s={11} />
    </Big>
  ),
  selectLocation: (
    <Big>
      <SelectedSquare />
      <path d="M15.6 14.8Q16 11.6 19 11.6Q22 11.6 22.4 14.8Q22 18.4 19 22.2Q16 18.4 15.6 14.8Z" fill="#7394a6" stroke="#4e7184" strokeWidth=".7" />
      <circle cx="19" cy="14.8" r="1.6" fill="#fff" stroke="#4e7184" strokeWidth=".6" />
    </Big>
  ),
};

type Tool = { id: string; label: string; icon: ReactNode; dim?: boolean; on?: boolean; menu?: boolean };
type Piece = Tool | "sep";

const t = (label: string, icon: ReactNode, extra: Partial<Tool> = {}): Tool => ({ id: label, label, icon, ...extra });

const barOne: Piece[][] = [
  [
    t("New project", Icons.newProject), t("Open", Icons.open), t("Save", Icons.save), t("New layout", Icons.newLayout),
    t("Layout manager", Icons.layoutManager), t("Style manager", Icons.styleManager),
  ],
  [
    t("Pan map", Icons.pan, { on: true }), t("Pan to selection", Icons.panSelection), t("Zoom in", Icons.zoomIn),
    t("Zoom out", Icons.zoomOut), t("Zoom full", Icons.zoomFull), t("Zoom to selection", Icons.zoomSelection, { dim: true }),
    t("Zoom to layer", Icons.zoomLayer), t("Native resolution", Icons.zoomNative), t("Zoom last", Icons.zoomLast),
    t("Zoom next", Icons.zoomNext, { dim: true }), t("New map view", Icons.newMapView), t("New 3D map view", Icons.new3d),
    t("New bookmark", Icons.newBookmark), t("Bookmarks", Icons.bookmarks), t("Temporal controller", Icons.temporal), t("Refresh", Icons.refresh),
  ],
  [
    t("Identify", Icons.identify), t("Attribute table", Icons.attributes, { dim: true }), t("Field calculator", Icons.abacus, { dim: true }),
    t("Toolbox", Icons.gear, { on: true }), t("Statistics", Icons.sigma), t("Measure", Icons.measure, { menu: true }),
    t("Map tips", Icons.mapTips), t("Run feature action", Icons.runAction, { dim: true, menu: true }), t("Text annotation", Icons.annotation, { menu: true }),
  ],
];

const barTwo: Piece[][] = [
  [
    t("Data source manager", Icons.addLayer), t("New GeoPackage", Icons.geopackage), t("New shapefile", Icons.shapefile),
    t("New SpatiaLite", Icons.spatialite), t("New scratch layer", Icons.memoryLayer), "sep", t("New virtual layer", Icons.virtualLayer), "sep",
  ],
  [
    t("Current edits", Icons.editsAll, { dim: true }), t("Toggle editing", Icons.edit, { dim: true }), t("Save edits", Icons.saveEdits, { dim: true }),
    t("Add feature", Icons.addFeature, { dim: true }), t("Vertex tool", Icons.vertexTool, { dim: true, menu: true }),
    t("Modify attributes", Icons.modifyAttributes, { dim: true }), t("Delete selected", Icons.trash, { dim: true }), t("Cut", Icons.cut, { dim: true }),
    t("Copy", Icons.copy, { dim: true }), t("Paste", Icons.paste, { dim: true }), t("Undo", Icons.undo, { dim: true }), t("Redo", Icons.redo, { dim: true }),
  ],
  [
    t("Label options", Icons.label, { dim: true }), t("Diagram options", Icons.diagram, { dim: true }), "sep",
    t("Highlight pinned labels", Icons.pinnedLabels), t("Toggle unplaced labels", Icons.unplacedLabels), "sep",
    t("Pin labels", Icons.pinLabel, { dim: true }), t("Show labels", Icons.showLabel, { dim: true }), t("Move label", Icons.moveLabel, { dim: true }),
    t("Rotate label", Icons.rotateLabel, { dim: true }), t("Change label", Icons.changeLabel, { dim: true }),
  ],
  [t("Add web service", Icons.metaAdd), t("Search web services", Icons.metaSearch), t("MetaSearch", Icons.binoculars)],
  [t("Python console", Icons.python)],
  [t("Help contents", Icons.help)],
  [],
];

const barThree: Piece[][] = [
  [
    t("Select features", Icons.selectFeatures, { dim: true, menu: true }), t("Select by form", Icons.selectByForm, { dim: true, menu: true }),
    t("Deselect", Icons.deselect, { menu: true }), t("Select by location", Icons.selectLocation),
  ],
  [],
];

function Down({ faint = false }: { faint?: boolean }) {
  return (
    <svg viewBox="0 0 16 9" className="w-4 shrink-0" aria-hidden="true">
      <path d="M0 0H16L8 9Z" fill={faint ? "#b4b4b4" : "#555"} />
    </svg>
  );
}

function DotGrip({ className }: { className: string }) {
  return (
    <div
      className={`bg-[radial-gradient(circle,#bdbdbd_1px,transparent_2px)] bg-[length:6px_6px] ${className}`}
      aria-hidden="true"
    />
  );
}

function ToolBar({ groups, height, pad }: { groups: Piece[][]; height: string; pad: string }) {
  return (
    <div className={`flex ${height}`}>
      {groups.map((group, gi) => (
        <div
          key={gi}
          className={`flex items-center border-b-2 border-l border-b-[#b4b4b4] border-l-[#f8f8f8] bg-linear-to-b from-[#f6f6f6] to-[#ebebeb] last:flex-1 ${pad}`}
        >
          <DotGrip className="mr-[7px] ml-2 h-10 w-[9px]" />
          {group.map((p, i) =>
            p === "sep" ? (
              <div key={i} className="flex w-[15px] justify-center">
                <div className="h-10 w-[3px] border-l border-[#c9c9c9] bg-white" />
              </div>
            ) : (
              <div key={p.id} className="flex items-center">
                <button
                  type="button"
                  aria-label={p.label}
                  className={
                    p.on
                      ? "mx-px flex size-16 items-center justify-center rounded-md border-2 border-[#a9a9a9] bg-[#dadada]"
                      : "flex size-[66px] items-center justify-center"
                  }
                >
                  <span className={p.dim ? "opacity-35 grayscale-50" : ""}>{p.icon}</span>
                </button>
                {p.menu && (
                  <button type="button" aria-label={`${p.label} menu`} className="flex w-6 justify-center pr-1.5 pl-1">
                    <Down />
                  </button>
                )}
              </div>
            ),
          )}
        </div>
      ))}
    </div>
  );
}

/* ---------- small icons ---------- */

function RasterIcon({ faded = false }: { faded?: boolean }) {
  const d = faded ? "#6f7176" : "#263b50";
  const l = faded ? "#c3cbd9" : "#a6c4e2";
  return (
    <Small>
      <rect x="2" y="1.5" width="13" height="13" fill={l} />
      <path d="M2 1.5H6.3V5.8H2ZM10.7 1.5H15V5.8H10.7ZM6.3 5.8H10.7V10.2H6.3ZM2 10.2H6.3V14.5H2Z" fill={d} />
      <path d="M10.7 10.2H15V14.5H10.7Z" fill={faded ? "#dcdcdc" : "#fff"} />
    </Small>
  );
}

function VectorIcon() {
  return (
    <Small>
      <path
        d="M.8 3.6C3.2 1.4 4.6 2.2 6.4 3.2C8.6 4.2 12 1.4 15 2.8C15.9 4.4 15.6 9.6 15 11.6C13 12.4 12 11 10.4 9.4C8 8.4 6.4 12.4 3 13.4C.4 13.4 .2 6 .8 3.6Z"
        fill="#d3e0ee"
        stroke="#2e4f72"
        strokeWidth=".8"
      />
    </Small>
  );
}

function QIcon() {
  return (
    <Small>
      <circle cx="8" cy="8" r="6.2" fill="#fff" stroke="#64aa10" strokeWidth="3" />
      <path d="M8 5.4L11.6 8.6L10 11.2L7 7.6Z" fill="#f4802a" />
      <path d="M8.6 9.2L11 8L15.8 13V15.8H13Z" fill="#3f9a34" stroke="#fff" strokeWidth=".5" />
    </Small>
  );
}

function HtmlIcon() {
  return (
    <Small>
      <rect x=".5" y=".5" width="15" height="15" fill="#fff" stroke="#8a8a84" />
      <path d="M5.6 3.4L3.4 6L5.6 8.6M10.4 3.4L12.6 6L10.4 8.6M9 3L7 9" fill="none" stroke="#8b3fcf" strokeWidth="1.1" />
      <path d="M2 10.6H11M2 13H13" stroke="#b4b4b4" strokeWidth=".8" />
    </Small>
  );
}

function CsvIcon() {
  return (
    <Small>
      <rect x="1" y="1" width="14" height="14" fill="#f6f6f6" stroke="#7c7c78" strokeWidth=".8" />
      <path d="M1 4.4H15" stroke="#7c7c78" strokeWidth=".8" />
      <path d="M2.6 2.8H6M7.4 2.8H13.4" stroke="#888" />
      <path d="M2.6 6.6H6M7.4 6.6H13.4M2.6 8.8H6M7.4 8.8H13.4M2.6 11H6M7.4 11H13.4M2.6 13.2H6M7.4 13.2H13.4" stroke="#999" strokeWidth=".9" />
    </Small>
  );
}

function ClockIcon() {
  return (
    <Small>
      <circle cx="8" cy="8" r="7.2" fill="#eef3f3" stroke="#7a7a7a" strokeWidth=".8" />
      <path d="M8 3.4V8L11 11" fill="none" stroke="#555" strokeWidth=".9" />
    </Small>
  );
}

function FilterIcon() {
  return (
    <Small>
      <path d="M1 2H15L9.8 8.4V14.8L7.2 13.6V8.4Z" fill={BLUE} stroke={NAVY} strokeWidth=".7" />
      <rect x="1" y=".8" width="14" height="2.6" fill="#fdea2e" stroke="#a89420" strokeWidth=".5" />
    </Small>
  );
}

function TreeArrowIcon({ up = false, star = false }: { up?: boolean; star?: boolean }) {
  return (
    <Small>
      <path d="M.6 2.6H15M2.2 2.6V13.8H6M2.2 7.4H6" fill="none" stroke="#999" strokeWidth="1" />
      <rect x="5" y="5.6" width="2.6" height="2.6" fill="#ffe08a" stroke="#f08a00" strokeWidth="1" />
      <rect x="5" y="11.8" width="2.6" height="2.6" fill="#ffe08a" stroke="#f08a00" strokeWidth="1" />
      <path
        d={up ? "M11 .8L15.6 6H12.8V14.6H9.2V6H6.4Z" : "M9.2 1.2H12.8V10.2H15.6L11 15.6L6.4 10.2H9.2Z"}
        fill={BLUE}
        stroke={NAVY}
        strokeWidth=".7"
      />
      {star && <path d="M5.6 .2L7 3.6L10.8 3.2L8.4 6L10 9.4L6.4 8L3 10.6L3.2 6.6L0 4.6L4 3.8Z" fill="#fff200" stroke="#f09a00" strokeWidth=".8" />}
    </Small>
  );
}

function SmallWrench() {
  return (
    <Small>
      <g transform="translate(-6.4 -4.8) scale(.96)"><WrenchShape /></g>
    </Small>
  );
}

const smallIcons = {
  addLayer: (
    <Small>
      <rect x="1.6" y="1.4" width="11.4" height="12" fill="#f4f4f4" stroke="#8f8f86" strokeWidth=".9" />
      <PlusBadge x={10} y={10.4} s={6} />
    </Small>
  ),
  refresh: <Small><g transform="scale(.667)"><RefreshShape /></g></Small>,
  info: (
    <Small>
      <circle cx="8" cy="8" r="6.6" fill={BLUE} stroke="#3d6ea3" strokeWidth=".7" />
      <text x="8" y="12" fontSize="11.5" fontStyle="italic" fontWeight="700" textAnchor="middle" fontFamily="'Liberation Serif', serif" fill="#fff">i</text>
    </Small>
  ),
  brush: (
    <Small>
      <path d="M2.6 5.6L7.4 2.8L9 7.6L5.6 8.8Z" fill="#fdee4a" />
      <path d="M.4 8.4L2.6 5.6L5.6 8.4L4.4 11Z" fill="#5b9be0" />
      <path d="M.4 8.6L4 10.4L3.6 12.8L1.2 11.8Z" fill="#e8402f" />
      <path d="M5.6 7.2L11 9.8L9.8 13.8L8 14.8L2.4 12.6Z" fill="#e0a868" stroke="#a07030" strokeWidth=".5" />
      <path d="M9.6 8.6L15 2.2" stroke="#a06c18" strokeWidth="2.2" strokeLinecap="round" />
      <path d="M9.6 8.4L15 2" stroke="#dca63c" strokeWidth="1" strokeLinecap="round" />
    </Small>
  ),
  addGroup: (
    <Small>
      <path d="M1 8V14.4H9M3.4 4.6H11V12H3.4ZM6 2.4H13.4V9.6" fill="none" stroke="#7d7d78" strokeWidth=".9" />
      <path d="M7.6 12V3Q7.6 .8 9 .8Q10.4 .8 10.4 3V9" fill="none" stroke={NAVY} strokeWidth=".9" />
      <PlusBadge x={10} y={10} s={6} />
    </Small>
  ),
  eye: (
    <Small>
      <path d="M1 4.4Q8 -.6 14.6 4.6" fill="none" stroke="#888" strokeWidth=".8" />
      <path d="M.8 8Q8 1.4 15.4 8Q8 14 .8 8Z" fill="#fff" stroke="#777" strokeWidth=".8" />
      <circle cx="8" cy="7.6" r="3.7" fill="#7aa9dc" stroke={NAVY} strokeWidth=".6" />
      <circle cx="8" cy="7.6" r="1.4" fill="#1b2f48" />
      <Arrowhead x={12.6} y={13} />
    </Small>
  ),
  expression: (
    <Small>
      <text x=".2" y="9.6" fontSize="22" fontFamily="'Liberation Serif', serif" fill="#555">ε</text>
      <path d="M8.4 8.6H15.8L14.4 11.4V15.8H10V11.4Z" fill="#aaa" stroke="#888" strokeWidth=".5" />
    </Small>
  ),
  remove: (
    <Small>
      <rect x="1.2" y="1.4" width="11" height="12" fill="#f4f4f4" stroke="#8f8f86" strokeWidth=".9" />
      <rect x="9.6" y="10" width="6" height="5.4" rx=".8" fill="#f04050" />
      <path d="M10.8 12.7H14.4" stroke="#fff" strokeWidth="1.2" />
    </Small>
  ),
  models: (
    <Small>
      <GearShape fill="#dd1522" stroke="#dd1522" c={5.4} k={0.46} />
      <g transform="translate(6.2 3.4)"><GearShape fill="#777" stroke="#777" c={5.6} k={0.34} /></g>
      <g transform="translate(2.6 8.4)"><GearShape fill="#7fa8dc" stroke="#5f90d0" c={5.2} k={0.28} /></g>
      <Arrowhead x={13} y={13.6} />
    </Small>
  ),
  python: (
    <Small>
      <g transform="translate(.6 1.4) scale(.56)"><path d={PY_TOP} fill="#2271aa" /><path d={PY_BOTTOM} fill="#ffd43b" /></g>
      <Arrowhead x={12} y={13.6} />
    </Small>
  ),
  results: (
    <Small>
      <path d="M2.8 .8H10L13.4 4.6V15.2H2.8Z" fill="#fff" stroke="#777" strokeWidth=".8" />
      <path d="M9.8 .8V4.8H13.4" fill="none" stroke="#777" strokeWidth=".8" />
      <path d="M4.8 5.6H8M4.8 8H11.4M4.8 10.4H11.4M4.8 12.8H10" stroke="#444" strokeWidth=".8" />
    </Small>
  ),
  editInPlace: (
    <Small>
      <rect x="1.4" y="1.6" width="9.4" height="9" fill="#b9b28c" stroke="#a0986c" strokeWidth=".6" />
      <path d="M8 13L13.4 4.4L15.6 5.8L10.2 14L7.6 15.4Z" fill="#ddd" stroke="#999" strokeWidth=".5" />
    </Small>
  ),
  form: (
    <Small>
      <rect x="1" y="1" width="13.4" height="13.4" fill="#f4f4f4" stroke="#9aa2a8" strokeWidth=".8" />
      <path d="M3 5H6M3 10.4H6" stroke="#7e8a92" strokeWidth="1.2" />
      <path d="M7.6 3.4H12.6V6.6H7.6ZM7.6 8.8H12.6V12H7.6Z" fill="#fff" stroke="#9aa2a8" strokeWidth=".8" />
    </Small>
  ),
  deselect: (
    <Small>
      <rect x=".8" y="1" width="8.6" height="8.4" fill="#ffe935" stroke="#c8a000" strokeWidth=".8" />
      <rect x="3.4" y="3.6" width="8.6" height="8.4" fill="#ffe935" stroke="#c8a000" strokeWidth=".8" />
      <NoEntry x={8.4} y={8.6} s={7.2} />
    </Small>
  ),
  copy: <Small><g transform="scale(.66)">{copyArt}</g></Small>,
  print: (
    <Small>
      <path d="M4 1H12V5H4Z" fill="#fff" stroke="#888" strokeWidth=".8" />
      <rect x="1" y="5" width="14" height="6.4" rx="1" fill="#888" />
      <path d="M4 9H12V15H4Z" fill="#fff" stroke="#888" strokeWidth=".8" />
      <path d="M5.4 11H10.6M5.4 13H10.6" stroke="#999" strokeWidth=".7" />
    </Small>
  ),
  identifyMode: (
    <Small>
      <rect x=".8" y=".8" width="14" height="13.4" fill="#cdd3d8" stroke="#333" strokeWidth=".7" strokeDasharray="1.2 .8" />
      <circle cx="5" cy="5" r="4.8" fill={BLUE} />
      <text x="5" y="8.2" fontSize="9.5" fontStyle="italic" fontWeight="700" textAnchor="middle" fontFamily="'Liberation Serif', serif" fill="#fff">i</text>
      <CursorShape x={6.6} y={6.4} k={0.72} />
    </Small>
  ),
};

/* ---------- shared panel pieces ---------- */

function DockTitle({ title, short = false }: { title: string; short?: boolean }) {
  return (
    <div className={`flex items-center gap-1.5 pr-[3px] pl-2 ${short ? "h-10" : "h-[46px]"}`}>
      <h2 className="flex-1 pb-0.5 text-[22px] text-[#262626]">{title}</h2>
      <button type="button" aria-label={`Float ${title}`} className="size-[22px]">
        <svg viewBox="0 0 22 22" className="size-full">
          <rect x="1" y="1" width="20" height="20" rx="3" fill="#e6e6e6" stroke="#77746f" strokeWidth="1.6" />
          <path d="M5 10H12V17H5ZM9 10V5H17V12.4H12" fill="none" stroke="#6a6762" strokeWidth="1.6" />
        </svg>
      </button>
      <button type="button" aria-label={`Close ${title}`} className="size-[22px]">
        <svg viewBox="0 0 22 22" className="size-full">
          <rect x="1" y="1" width="20" height="20" rx="3" fill="#e6e6e6" stroke="#77746f" strokeWidth="1.6" />
          <path d="M5.5 5.5L16.5 16.5M16.5 5.5L5.5 16.5" stroke="#5d5a56" strokeWidth="3.4" />
        </svg>
      </button>
    </div>
  );
}

function MiniTool({ label, children, dim = false }: { label: string; children: ReactNode; dim?: boolean }) {
  return (
    <button type="button" aria-label={label} className={dim ? "flex opacity-35" : "flex"}>
      {children}
    </button>
  );
}

function MiniSep() {
  return <div className="h-10 w-[3px] border-l border-[#cfcfcf] bg-white" />;
}

function HGrip({ className }: { className: string }) {
  return (
    <div className={`flex items-center justify-center ${className}`}>
      <DotGrip className="h-1.5 w-9" />
    </div>
  );
}

function ScrollBar({ before, thumb, after }: { before: string; thumb: string; after: string }) {
  return (
    <div className="flex w-[29px] shrink-0 flex-col border-x border-l-[#c4c4c4] border-r-[#d0d0d0] bg-[#e2e2e2]">
      <button type="button" aria-label="Scroll up" className="flex h-7 items-center justify-center border-b-2 border-[#c0c0c0] bg-[#f6f6f6]">
        <svg viewBox="0 0 14 9" className="w-3.5"><path d="M0 9H14L7 0Z" fill="#555" /></svg>
      </button>
      <div className={before} />
      <div className={`border-y-2 border-[#c0c0c0] bg-linear-to-r from-white to-[#efefef] ${thumb}`} />
      <div className={after} />
      <button type="button" aria-label="Scroll down" className="flex h-[30px] items-center justify-center border-t-2 border-[#c0c0c0] bg-[#f6f6f6]">
        <svg viewBox="0 0 14 9" className="w-3.5"><path d="M0 0H14L7 9Z" fill="#555" /></svg>
      </button>
    </div>
  );
}

function Twisty({ open }: { open: boolean }) {
  return (
    <span className="flex w-4 shrink-0 justify-center">
      {open ? (
        <svg viewBox="0 0 16 9" className="w-4"><path d="M0 0H16L8 9Z" fill="#555" /></svg>
      ) : (
        <svg viewBox="0 0 9 16" className="h-4"><path d="M0 0V16L9 8Z" fill="#555" /></svg>
      )}
    </span>
  );
}

function Tick({ id, label, checked = false }: { id: string; label: string; checked?: boolean }) {
  return (
    <span className="grid size-7 shrink-0 place-items-center">
      <input
        id={id}
        type="checkbox"
        aria-label={label}
        defaultChecked={checked}
        className="peer col-start-1 row-start-1 size-7 appearance-none rounded-xs border-2 border-[#bcbcbc] bg-white"
      />
      <svg viewBox="0 0 20 20" className="pointer-events-none invisible col-start-1 row-start-1 size-5 peer-checked:visible">
        <path d="M2 11.5L4.4 9.4L8 14.2L16.8 1L18.6 2.2L8.6 19H7.2Z" fill="#222" />
      </svg>
    </span>
  );
}

/* ---------- browser ---------- */

type Kind = "raster" | "vector" | "project" | "html" | "csv";
const files: [string, Kind][] = [
  ["CVA100.tif", "raster"], ["CVA1000.tif", "raster"], ["Filled.tif", "raster"], ["FlowAccum.tif", "raster"], ["FlowDir.tif", "raster"],
  ["layout", "project"], ["Map2.png", "raster"], ["Outlet.shp", "vector"], ["PourPoint.shp", "vector"], ["profile.html", "html"],
  ["Profile2.png", "raster"], ["Qdrift.tif", "raster"], ["Qdrift30.tif", "raster"], ["QdriftHill.sdat", "raster"], ["QDRiftHill.tif", "raster"],
  ["QDriftRandom100.shp", "vector"], ["QdriftRandom1000.shp", "vector"], ["QdriftSlope.sdat", "raster"], ["Sight.shp", "vector"],
  ["SIghtLineProfile.png", "raster"], ["SightProfile.csv", "csv"], ["SIghtProfile2.csv", "csv"], ["StreamNet.shp", "vector"],
  ["Streams.tif", "raster"], ["TargetSpot.shp", "vector"], ["viewspot.shp", "vector"], ["Visible.sdat", "raster"], ["", "project"],
];

const kindIcon: Record<Kind, ReactNode> = {
  raster: <RasterIcon />,
  vector: <VectorIcon />,
  project: <QIcon />,
  html: <HtmlIcon />,
  csv: <CsvIcon />,
};

function BrowserPanel() {
  return (
    <section className="flex min-h-0 flex-[1083] flex-col">
      <DockTitle title="Browser" />
      <div className="mb-[7px] flex h-[50px] items-center gap-[18px] pl-4">
        <MiniTool label="Add selected layers">{smallIcons.addLayer}</MiniTool>
        <MiniTool label="Refresh browser">{smallIcons.refresh}</MiniTool>
        <MiniTool label="Filter browser"><FilterIcon /></MiniTool>
        <MiniTool label="Collapse browser"><TreeArrowIcon up /></MiniTool>
        <MiniTool label="Properties">{smallIcons.info}</MiniTool>
      </div>
      <div className="flex min-h-0 flex-1 border-2 border-x-0 border-[#bababa] bg-white">
        <ul role="tree" aria-label="Browser" className="min-w-0 flex-1 overflow-hidden text-[25px]">
          {files.map(([name, kind], i) => (
            <li
              key={i}
              role="treeitem"
              aria-selected={name === "Sight.shp"}
              className={`flex h-9 items-center pl-[94px] whitespace-nowrap ${name === "Sight.shp" ? "mr-[120px] bg-[#dcdcdc]" : ""}`}
            >
              {kind === "project" && name ? <Twisty open={false} /> : <span className="w-4" />}
              <span className="mr-3 ml-[18px]">{kindIcon[kind]}</span>
              {name}
            </li>
          ))}
        </ul>
        <ScrollBar before="flex-[68]" thumb="flex-[236]" after="flex-[614]" />
      </div>
    </section>
  );
}

/* ---------- layers ---------- */

const layers: [string, string, string][] = [
  ["Streams", "1", "1"],
  ["FlowAccum", "1", "32767"],
  ["FlowDir", "0", "128"],
  ["Difference", "-11.484", "0"],
  ["Filled", "196.429", "375.56"],
  ["Qdrift", "195.9", "375.56"],
];

function LayersPanel() {
  return (
    <section className="flex min-h-0 flex-[883] flex-col">
      <DockTitle title="Layers" />
      <div className="mb-[7px] flex h-[50px] items-center gap-[18px] pl-4">
        <MiniTool label="Layer styling">{smallIcons.brush}</MiniTool>
        <MiniTool label="Add group">{smallIcons.addGroup}</MiniTool>
        <MiniTool label="Manage map themes">{smallIcons.eye}</MiniTool>
        <MiniTool label="Filter legend"><FilterIcon /></MiniTool>
        <div className="flex items-center gap-2.5">
          <MiniTool label="Filter by expression" dim>{smallIcons.expression}</MiniTool>
          <Down />
        </div>
        <div className="-ml-0.5 flex gap-[18px]">
          <MiniTool label="Expand all"><TreeArrowIcon /></MiniTool>
          <MiniTool label="Collapse all"><TreeArrowIcon up /></MiniTool>
          <MiniTool label="Remove layer">{smallIcons.remove}</MiniTool>
        </div>
      </div>
      <ul role="tree" aria-label="Layers" className="min-h-0 flex-1 overflow-hidden border-2 border-l-0 border-[#bababa] bg-white text-[25px]">
        {layers.map(([name, low, high], i) => (
          <li key={name} role="treeitem" aria-expanded="true" aria-selected={i === 0}>
            <div className={`flex h-9 items-center pl-[14px] ${i === 0 ? "bg-[#dcdcdc]" : ""}`}>
              <Twisty open />
              <span className="mr-3 ml-[18px] flex"><Tick id={`layer-${name}`} label={name} checked={i === 0} /></span>
              <RasterIcon faded={i === 0} />
              <label
                htmlFor={`layer-${name}`}
                className={i === 0 ? "ml-3 text-[26px] font-bold text-black underline decoration-3 underline-offset-3" : "ml-3 text-[26px] font-bold text-[#808080] italic"}
              >
                {name}
              </label>
            </div>
            <div className="flex h-9 items-center gap-3 pl-[88px]">
              <span className="size-8 bg-black" />
              {low}
            </div>
            <div className="flex h-9 items-center pl-[132px]">{high}</div>
          </li>
        ))}
      </ul>
    </section>
  );
}

/* ---------- map ---------- */

/* Raster cells of the stream layer: column, row, width, height. */
const cells: [number, number, number, number][] = [
  [66, 0, 1, 16], [67, 16, 1, 4], [68, 20, 1, 2], [69, 22, 1, 2], [70, 24, 1, 4], [71, 28, 1, 1], [72, 29, 1, 2], [68, 31, 4, 1],
  [67, 30, 1, 1], [66, 29, 1, 1], [65, 28, 1, 1], [62, 27, 3, 1], [61, 28, 1, 1], [60, 29, 1, 2], [59, 31, 1, 12], [58, 43, 1, 6],
  [57, 49, 1, 1], [56, 50, 1, 1], [55, 51, 1, 1], [54, 52, 1, 1], [52, 53, 2, 1], [51, 54, 1, 1], [45, 55, 6, 1], [44, 54, 1, 1],
  [39, 53, 5, 1], [38, 52, 1, 1], [36, 51, 2, 1], [34, 50, 2, 1], [33, 49, 1, 1], [31, 48, 2, 1], [28, 47, 3, 1], [22, 46, 6, 1],
  [21, 47, 1, 1], [20, 48, 1, 1], [19, 49, 1, 1], [18, 50, 1, 11], [19, 61, 2, 1], [21, 62, 2, 1], [23, 63, 1, 1], [24, 64, 1, 2],
  [25, 66, 10, 1], [35, 67, 2, 1], [37, 68, 1, 1], [38, 69, 3, 1], [41, 70, 1, 1], [42, 71, 1, 1], [43, 72, 2, 1], [45, 73, 1, 1],
  [46, 74, 4, 1], [50, 75, 1, 1], [51, 76, 1, 2], [52, 78, 1, 1], [53, 79, 1, 10], [52, 89, 1, 2], [51, 91, 1, 1], [52, 92, 1, 7],
  [53, 99, 1, 1], [54, 100, 1, 1], [55, 101, 1, 1], [56, 102, 1, 1], [57, 103, 1, 1], [58, 104, 1, 1], [59, 105, 1, 1], [60, 106, 1, 1],
  [61, 107, 1, 2], [59, 109, 2, 1], [58, 110, 1, 1], [57, 111, 1, 1], [56, 112, 1, 1], [45, 113, 11, 1], [44, 112, 1, 1], [33, 111, 11, 1],
  [32, 110, 1, 1], [30, 109, 2, 1], [29, 108, 1, 1], [17, 107, 12, 1], [16, 106, 1, 1], [15, 105, 1, 1], [10, 106, 5, 1], [9, 105, 1, 1],
  [0, 104, 9, 1],
];

function MapCanvas() {
  return (
    <main className="mt-[3px] flex min-w-0 flex-1 border border-[#b6b6b6] bg-white">
      <svg viewBox="0 0 1617 1972" preserveAspectRatio="xMinYMin slice" className="size-full" shapeRendering="crispEdges" role="img" aria-label="Streams raster">
        <g transform="translate(1 -3) scale(15.38)">
          {cells.map(([x, y, w, h]) => (
            <rect key={`${x}-${y}`} x={x} y={y} width={w} height={h} fill="#000" />
          ))}
        </g>
      </svg>
    </main>
  );
}

/* ---------- right side ---------- */

function ProcessingPanel() {
  return (
    <section className="flex flex-col">
      <DockTitle title="Processing Toolbox" />
      <div className="mb-[7px] flex h-[50px] items-center pl-4">
        <div className="flex items-center gap-[18px]">
          <MiniTool label="Models">{smallIcons.models}</MiniTool>
          <MiniTool label="Scripts">{smallIcons.python}</MiniTool>
          <MiniTool label="History"><ClockIcon /></MiniTool>
        </div>
        <button type="button" aria-label="Results viewer" className="ml-2.5 flex size-12 items-center justify-center rounded-md border-2 border-[#a9a9a9] bg-[#dadada]">
          {smallIcons.results}
        </button>
        <div className="ml-2 flex items-center gap-3.5">
          <MiniSep />
          <MiniTool label="Edit in place" dim>{smallIcons.editInPlace}</MiniTool>
          <MiniSep />
          <MiniTool label="Options"><SmallWrench /></MiniTool>
        </div>
      </div>
      <div className="flex h-12 items-center rounded-md border-2 border-[#adadad] bg-white px-[15px]">
        <svg viewBox="0 0 24 24" className="size-6 shrink-0" aria-hidden="true">
          <circle cx="10" cy="9.4" r="8" fill="none" stroke="#8c8c8c" strokeWidth="2" />
          <path d="M15.6 15.4L22 22.4" stroke="#8c8c8c" strokeWidth="2.6" />
        </svg>
        <input type="text" aria-label="Search algorithms" defaultValue="reclass" className="min-w-0 flex-1 bg-transparent px-[17px] text-[25px] outline-none" />
        <button type="button" aria-label="Clear search" className="h-5">
          <svg viewBox="0 0 27 20" className="h-5">
            <path d="M0 10L7 0H27V20H7Z" fill="#949494" />
            <path d="M11 4.5L20 15.5M20 4.5L11 15.5" stroke="#fff" strokeWidth="1.8" />
          </svg>
        </button>
      </div>
      <div className="flex h-[158px] border-2 border-t-0 border-[#bababa] bg-white">
        <ul role="tree" aria-label="Algorithms" className="min-w-0 flex-1 overflow-hidden pt-0.5 text-[25px]">
          <li role="treeitem" className="flex h-9 items-center pl-3">
            <Twisty open={false} />
            <span className="mr-3 ml-[18px]"><ClockIcon /></span>Recently used
          </li>
          <li role="treeitem" className="flex h-9 items-center pl-3">
            <Twisty open />
            <span className="mr-3 ml-[18px]"><QIcon /></span>Raster analysis
          </li>
          <li role="treeitem" className="flex h-9 items-center pl-[86px]">
            <span className="mr-3"><Small><GearShape fill="#8db3e2" stroke="#2f73c4" c={8} k={0.68} /></Small></span>Reclassify by layer
          </li>
          <li role="treeitem" aria-selected="true" className="flex h-9 items-center bg-[#dcdcdc] pl-[86px]">
            <span className="mr-3"><Small><GearShape fill="#a9bcd8" stroke="#7896c4" c={8} k={0.68} /></Small></span>Reclassify by table
          </li>
          <li role="treeitem" className="flex h-9 items-center pl-3">
            <span className="w-4" />
            <span className="mr-3 ml-[18px]"><QIcon /></span>Vector table
          </li>
        </ul>
        <ScrollBar before="hidden" thumb="flex-[54]" after="flex-[46]" />
      </div>
      <div role="tablist" className="mt-0.5 flex items-start border-t-2 border-[#b4b4b4] text-[25px] text-[#262626]">
        <button type="button" role="tab" aria-selected="false" className="h-[46px] w-[208px] rounded-b-md border-2 border-t-0 border-[#b0b0b0] bg-[#dadada]">
          Layer Styling
        </button>
        <button type="button" role="tab" aria-selected="true" className="-mt-0.5 -ml-0.5 h-[52px] w-[280px] rounded-b-md border-2 border-t-0 border-[#a8a8a8] bg-[#f4f4f4]">
          Processing Toolbox
        </button>
      </div>
    </section>
  );
}

function ResultsPanel() {
  return (
    <section className="flex min-h-0 flex-[422] flex-col">
      <DockTitle title="Results Viewer" short />
      <ul aria-label="Results" className="min-h-0 flex-1 border-2 border-[#bababa] bg-white text-[25px]">
        <li className="flex h-9 items-center gap-3 bg-[#dcdcdc] pl-1">
          <Small>
            <path d="M8 .6L14 4.4V11.6L8 15.4L2 11.6V4.4Z" fill="#fdece2" stroke="#a08c80" strokeWidth=".6" />
            <path d="M2 4.4L8 8L14 4.4M8 8V15.4" fill="none" stroke="#a08c80" strokeWidth=".6" strokeDasharray="3 1.4" />
          </Small>
          Output HTML File [07:20:14PM]
        </li>
      </ul>
    </section>
  );
}

function IdentifyPanel() {
  return (
    <section className="flex min-h-0 flex-[1022] flex-col">
      <DockTitle title="Identify Results" />
      <div className="mb-[7px] flex h-[50px] items-center gap-[15px] pl-4">
        <MiniTool label="View feature form" dim>{smallIcons.form}</MiniTool>
        <MiniSep />
        <div className="flex gap-[18px]">
          <MiniTool label="Expand tree"><TreeArrowIcon /></MiniTool>
          <MiniTool label="Collapse tree"><TreeArrowIcon up /></MiniTool>
          <MiniTool label="Expand new results"><TreeArrowIcon star /></MiniTool>
        </div>
        <MiniSep />
        <MiniTool label="Clear results">{smallIcons.deselect}</MiniTool>
        <MiniSep />
        <div className="flex gap-[18px]">
          <MiniTool label="Copy attributes" dim>{smallIcons.copy}</MiniTool>
          <MiniTool label="Print response" dim>{smallIcons.print}</MiniTool>
        </div>
        <MiniSep />
        <div className="flex items-center gap-2.5">
          <MiniTool label="Identify mode">{smallIcons.identifyMode}</MiniTool>
          <Down />
        </div>
        <MiniTool label="Identify settings"><SmallWrench /></MiniTool>
      </div>
      <div className="min-h-0 flex-1 border-2 border-[#bababa] bg-white">
        <table className="w-full table-fixed border-collapse text-left text-[22px] text-[#262626]">
          <thead>
            <tr className="h-9 border-b-2 border-[#a8a8a8] bg-linear-to-b from-white to-[#ececec]">
              <th className="w-[266px] border-r-2 border-[#cacaca] pl-1 font-normal">Feature</th>
              <th className="pl-1.5 font-normal">Value</th>
            </tr>
          </thead>
        </table>
      </div>
      <div className="flex flex-col gap-3.5 py-3 pr-[9px] pl-2.5 text-[25px]">
        <div className="flex items-center gap-3.5">
          <label htmlFor="mode">Mode</label>
          <div className="relative flex flex-1 items-center">
            <select id="mode" className="h-12 w-full appearance-none rounded-md border-2 border-[#acacac] bg-linear-to-b from-white to-[#ececec] pl-2">
              <option>Current Layer</option>
            </select>
            <span className="pointer-events-none absolute right-3.5 flex"><Down /></span>
          </div>
        </div>
        <div className="flex items-center">
          <label htmlFor="view" className="mr-3 text-[#b4b4b4]">View</label>
          <div className="relative flex w-[158px] items-center">
            <select id="view" disabled className="h-12 w-full appearance-none rounded-md border-2 border-[#c4c4c4] bg-linear-to-b from-[#fafafa] to-[#ececec] pl-2 text-[#999] opacity-100">
              <option>Tree</option>
            </select>
            <span className="pointer-events-none absolute right-3.5 flex"><Down faint /></span>
          </div>
          <button type="button" className="ml-auto h-10 w-[72px] rounded-md border-2 border-[#acacac] bg-linear-to-b from-white to-[#f2f2f2] text-[21px] text-[#262626]">
            Help
          </button>
        </div>
      </div>
    </section>
  );
}

/* ---------- status bar ---------- */

function Spin({ id, value, width }: { id: string; value: string; width: string }) {
  return (
    <div className={`flex h-[46px] overflow-hidden rounded-md border-2 border-[#acacac] bg-white ${width}`}>
      <input id={id} type="text" defaultValue={value} className="min-w-0 flex-1 bg-transparent pl-2 outline-none" />
      <div className="flex w-7 flex-col justify-center gap-2 border-l-2 border-[#b8b8b8] bg-[#f4f4f4]">
        <button type="button" aria-label="Increase" className="flex justify-center"><svg viewBox="0 0 14 9" className="w-3.5"><path d="M0 9H14L7 0Z" fill="#555" /></svg></button>
        <button type="button" aria-label="Decrease" className="flex justify-center"><svg viewBox="0 0 14 9" className="w-3.5"><path d="M0 0H14L7 9Z" fill="#555" /></svg></button>
      </div>
    </div>
  );
}

function StatusBar() {
  return (
    <footer className="flex h-[62px] shrink-0 items-center pt-0.5 pr-3 pl-2 text-[22px] text-[#1e1e1e]">
      <div className="flex h-[46px] w-[424px] items-center gap-3 rounded-md border-2 border-[#b0b0b0] bg-white pl-[15px]">
        <svg viewBox="0 0 24 24" className="size-6 shrink-0" aria-hidden="true">
          <circle cx="10" cy="9.4" r="8" fill="none" stroke="#8c8c8c" strokeWidth="2" />
          <path d="M15.6 15.4L22 22.4" stroke="#8c8c8c" strokeWidth="2.6" />
        </svg>
        <input type="text" aria-label="Locator" placeholder="Type to locate (⌘K)" className="min-w-0 flex-1 bg-transparent pl-1 text-[25px] outline-none placeholder:text-[#7c7c7c]" />
      </div>
      <label htmlFor="coord" className="mr-2 ml-auto">Coordinate</label>
      <input id="coord" type="text" defaultValue="628247.9,4848050.5" className="h-[46px] w-[254px] rounded-md border-2 border-[#acacac] bg-white text-center" />
      <button type="button" aria-label="Toggle mouse position" className="mr-6 ml-2">
        <svg viewBox="0 0 16 16" className="size-8">
          <rect x="-3.2" y="-6" width="6.8" height="13" rx="3.2" fill="#cbbcbc" transform="translate(8.6 8.6) rotate(-30)" />
          <g transform="translate(7 7.6) rotate(-30)" stroke="#111">
            <rect x="-3.3" y="-6.6" width="6.6" height="13.2" rx="3.2" fill="#fff" strokeWidth="1.3" />
            <path d="M-3.2 -.6Q0 1.2 3.2 -.6" fill="none" strokeWidth="1.2" />
            <path d="M0 -6V-1" strokeWidth="2.2" />
            <circle cy="3.4" r="1.2" fill="#fff" strokeWidth="1" />
          </g>
          <g fill="#111"><circle cx="10.4" cy="3.6" r=".6" /><circle cx="12.2" cy="3" r=".6" /><circle cx="13.8" cy="1.4" r=".8" /><circle cx="1" cy="10.4" r=".7" /></g>
        </svg>
      </button>
      <label htmlFor="scale" className="mr-2">Scale</label>
      <div className="mr-[23px] flex h-12 w-[188px] overflow-hidden rounded-md border-2 border-[#acacac] bg-white">
        <input id="scale" type="text" defaultValue="1:2214" className="min-w-0 flex-1 bg-transparent pl-2 outline-none" />
        <button type="button" aria-label="Scale presets" className="flex w-[42px] items-center justify-center border-l-2 border-[#d4d4d4] bg-[#f6f6f6]"><Down /></button>
      </div>
      <button type="button" aria-label="Lock scale" className="mr-[18px]">
        <svg viewBox="0 0 26 30" className="h-[30px]">
          <path d="M6.5 15V8Q6.5 1.5 13 1.5Q19.5 1.5 19.5 8V15" fill="none" stroke="#888" strokeWidth="2.6" />
          <rect x="1.5" y="14" width="23" height="15.5" rx="2.4" fill="#606060" />
        </svg>
      </button>
      <label htmlFor="magnifier" className="mr-2">Magnifier</label>
      <Spin id="magnifier" value="100%" width="w-[178px]" />
      <label htmlFor="rotation" className="mr-5 ml-[18px]">Rotation</label>
      <Spin id="rotation" value="0.0 °" width="w-[182px]" />
      <label className="ml-3 flex items-center gap-2.5">
        <Tick id="render" label="Render" checked />
        Render
      </label>
      <button type="button" className="ml-[33px] flex items-center gap-[3px]">
        <svg viewBox="0 0 32 32" className="size-8" fill="none" stroke={GREY} strokeWidth="1.8" aria-hidden="true">
          <circle cx="15" cy="14" r="10.5" />
          <ellipse cx="15" cy="14" rx="5" ry="10.5" />
          <path d="M4.5 14H25.5M6 8.5H24M6 19.5H24M15 1V27" />
          <path d="M2 14C4 26 20 32 29 19" strokeWidth="2.4" strokeDasharray="5 1.4" />
        </svg>
        EPSG:26915
      </button>
      <button type="button" aria-label="Messages" className="ml-[45px]">
        <svg viewBox="0 0 34 32" className="h-8">
          <path d="M17 2C26 2 32 7 32 14C32 19 30 22 27 24L29 31L21 26C10 28 2 22 2 14C2 7 8 2 17 2Z" fill="#5c5c5c" />
          <g fill="#fff"><circle cx="10" cy="14" r="2.6" /><circle cx="17" cy="14" r="2.6" /><circle cx="24" cy="14" r="2.6" /></g>
        </svg>
      </button>
    </footer>
  );
}

/* ---------- window ---------- */

export default function App() {
  return (
    <div className="flex h-screen flex-col bg-white px-28 pt-[75px] pb-[148px] font-[Inter,sans-serif] leading-none text-black">
      <div className="flex min-h-0 flex-1 flex-col overflow-hidden rounded-xl bg-[#ececec] shadow-[0_0_0_1px_rgba(0,0,0,0.2),0_44px_80px_8px_rgba(0,0,0,0.42)]">
        <header className="flex h-[45px] shrink-0 items-center border-b-2 border-[#adadad] bg-linear-to-b from-[#e8e8e8] to-[#cfcfcf] px-4 pt-[3px]">
          <div className="flex flex-1 gap-4">
            <button type="button" aria-label="Close window" className="size-6 rounded-full border border-[#e2463f] bg-[#ff6159]" />
            <button type="button" aria-label="Minimise window" className="size-6 rounded-full border border-[#e1a032] bg-[#ffbf40]" />
            <button type="button" aria-label="Zoom window" className="size-6 rounded-full border border-[#1aab38] bg-[#1bcf49]" />
          </div>
          <h1 className="text-[26px] text-[#464646]">watershedmodel — QGIS</h1>
          <div className="flex-1" />
        </header>
        <ToolBar groups={barOne} height="h-[77px]" pad="pt-px pr-[7px]" />
        <ToolBar groups={barTwo} height="h-[78px]" pad="pt-0.5 pr-1.5" />
        <ToolBar groups={barThree} height="h-[76px]" pad="pt-1 pr-1.5" />
        <div className="flex min-h-0 flex-1">
          <div className="flex w-[791px] shrink-0 flex-col">
            <BrowserPanel />
            <HGrip className="h-[11px]" />
            <LayersPanel />
          </div>
          <div className="flex w-3.5 shrink-0 items-center justify-center">
            <DotGrip className="h-9 w-1.5" />
          </div>
          <MapCanvas />
          <div className="flex w-3 shrink-0 items-center justify-center">
            <DotGrip className="h-9 w-1.5" />
          </div>
          <div className="flex w-[924px] shrink-0 flex-col pr-px">
            <ProcessingPanel />
            <HGrip className="h-[13px]" />
            <ResultsPanel />
            <HGrip className="h-2.5" />
            <div className="h-[138px] shrink-0 border-2 border-[#bababa] bg-white px-2 py-2 text-[25px] leading-8">
              <p><b>Algorithm</b>: Output HTML File</p>
              <p><b>File path</b>: <a href="#profile" className="text-[#0563d8] underline decoration-2 underline-offset-4">/Users/maples/Dropbox/Fundamentals/L11/profile.html</a></p>
            </div>
            <HGrip className="h-2.5" />
            <IdentifyPanel />
          </div>
        </div>
        <StatusBar />
      </div>
    </div>
  );
}
